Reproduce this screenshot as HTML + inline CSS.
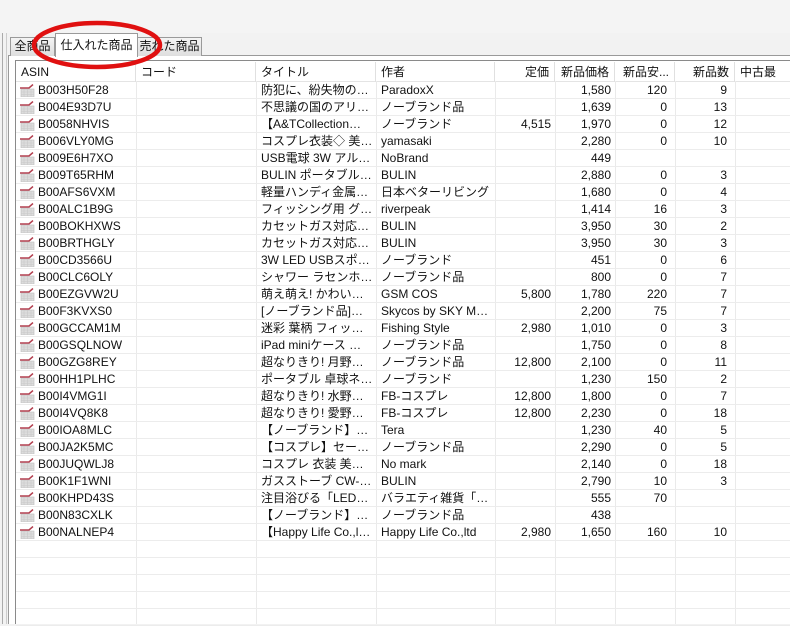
<!DOCTYPE html>
<html><head><meta charset="utf-8"><style>
*{margin:0;padding:0;box-sizing:border-box}
body{width:790px;height:624px;overflow:hidden;background:#f2f2f2;font-family:"Liberation Sans","Noto Sans CJK JP",sans-serif;font-size:12px;color:#111;position:relative}
.a{position:absolute}
.tab{position:absolute;border:1px solid #9a9a9a;border-bottom:none;background:linear-gradient(#f4f4f4,#dedede);font-size:12px;text-align:center;line-height:17px}
.row{position:absolute;left:16px;width:774px;height:17px;border-bottom:1px solid #ececec;line-height:17px;white-space:nowrap}
.c{position:absolute;top:0;height:17px;overflow:hidden;padding:0 4px;text-overflow:ellipsis}
.r{text-align:right}
.vl{position:absolute;top:81px;bottom:0;width:1px;background:#eaeaea}
.hd{position:absolute;top:62px;height:20px;line-height:20px;border-right:1px solid #e0e0e0;padding:0 5px;white-space:nowrap;overflow:hidden}
.ic{position:absolute;left:4px;top:2px;width:15px;height:13px}
</style></head><body>
<div class="a" style="left:0;top:0;width:790px;height:33px;background:#f4f4f4"></div>
<div class="a" style="left:2px;top:33px;width:1px;height:591px;background:#aaa"></div>
<div class="a" style="left:6px;top:33px;width:1px;height:591px;background:#ccc"></div>
<div class="a" style="left:8px;top:55px;width:782px;height:569px;background:#fff;border:1px solid #9a9a9a;border-right:none;border-bottom:none"></div>
<div class="tab" style="left:10px;top:37px;width:45px;height:19px">全商品</div>
<div class="tab" style="left:137px;top:37px;width:65px;height:19px">売れた商品</div>
<div class="tab" style="left:55px;top:33px;width:83px;height:24px;background:#fff;line-height:22px">仕入れた商品</div>
<div class="a" style="left:15px;top:60px;width:775px;height:564px;background:#fff;border:1px solid #8a8a8a;border-right:none;border-bottom:none"></div>
<div class="a" style="left:16px;top:61px;width:774px;height:21px;background:#fff;border-bottom:1px solid #e4e4e4"></div>
<div class="hd" style="left:16px;width:120px">ASIN</div>
<div class="hd" style="left:136px;width:120px">コード</div>
<div class="hd" style="left:256px;width:120px">タイトル</div>
<div class="hd" style="left:376px;width:119px">作者</div>
<div class="hd r" style="left:495px;width:60px">定価</div>
<div class="hd r" style="left:555px;width:60px">新品価格</div>
<div class="hd r" style="left:615px;width:60px">新品安...</div>
<div class="hd r" style="left:675px;width:60px">新品数</div>
<div class="hd" style="left:735px;width:60px">中古最</div>
<div class="vl" style="left:136px"></div><div class="vl" style="left:256px"></div><div class="vl" style="left:376px"></div><div class="vl" style="left:495px"></div><div class="vl" style="left:555px"></div><div class="vl" style="left:615px"></div><div class="vl" style="left:675px"></div><div class="vl" style="left:735px"></div>
<div id="rows"></div>
<svg class="a" style="left:0;top:0" width="220" height="80"><ellipse cx="97" cy="45" rx="63" ry="22" fill="none" stroke="#e01010" stroke-width="4.5"/></svg>
<script>
var d=[
["B003H50F28","防犯に、紛失物の捜...","ParadoxX","","1,580","120","9"],
["B004E93D7U","不思議の国のアリス...","ノーブランド品","","1,639","0","13"],
["B0058NHVIS","【A&TCollection】AK...","ノーブランド","4,515","1,970","0","12"],
["B006VLY0MG","コスプレ衣装◇ 美少...","yamasaki","","2,280","0","10"],
["B009E6H7XO","USB電球 3W アルミ・...","NoBrand","","449","",""],
["B009T65RHM","BULIN ポータブルラン...","BULIN","","2,880","0","3"],
["B00AFS6VXM","軽量ハンディ金属探...","日本ベターリビング","","1,680","0","4"],
["B00ALC1B9G","フィッシング用 グロー...","riverpeak","","1,414","16","3"],
["B00BOKHXWS","カセットガス対応アダ...","BULIN","","3,950","30","2"],
["B00BRTHGLY","カセットガス対応アダ...","BULIN","","3,950","30","3"],
["B00CD3566U","3W LED USBスポット...","ノーブランド","","451","0","6"],
["B00CLC6OLY","シャワー ラセンホース...","ノーブランド品","","800","0","7"],
["B00EZGVW2U","萌え萌え! かわいい ...","GSM COS","5,800","1,780","220","7"],
["B00F3KVXS0","[ノーブランド品]【コス...","Skycos by SKY MA...","","2,200","75","7"],
["B00GCCAM1M","迷彩 葉柄 フィッシン...","Fishing Style","2,980","1,010","0","3"],
["B00GSQLNOW","iPad miniケース デニ...","ノーブランド品","","1,750","0","8"],
["B00GZG8REY","超なりきり! 月野うさ...","ノーブランド品","12,800","2,100","0","11"],
["B00HH1PLHC","ポータブル 卓球ネット...","ノーブランド","","1,230","150","2"],
["B00I4VMG1I","超なりきり! 水野亜...","FB-コスプレ","12,800","1,800","0","7"],
["B00I4VQ8K8","超なりきり! 愛野美...","FB-コスプレ","12,800","2,230","0","18"],
["B00IOA8MLC","【ノーブランド】開閉式...","Tera","","1,230","40","5"],
["B00JA2K5MC","【コスプレ】セーラー服 ...","ノーブランド品","","2,290","0","5"],
["B00JUQWLJ8","コスプレ 衣装 美少...","No mark","","2,140","0","18"],
["B00K1F1WNI","ガスストーブ CW-C01...","BULIN","","2,790","10","3"],
["B00KHPD43S","注目浴びる「LEDで...","バラエティ雑貨「良品...","","555","70",""],
["B00N83CXLK","【ノーブランド】1.75W ...","ノーブランド品","","438","",""],
["B00NALNEP4"," 【Happy Life Co.,ltd...","Happy Life Co.,ltd","2,980","1,650","160","10"]];
var ic='<svg class="ic" viewBox="0 0 15 13"><rect x="1" y="5" width="13" height="8" fill="#ddd" stroke="#bbb" stroke-width="0.6"/><path d="M1 8h13M1 10.5h13M4 5v8M7.5 5v8M11 5v8" stroke="#c8c8c8" stroke-width="0.6"/><path d="M0 4h9l4-3.5" stroke="#b34050" stroke-width="1.5" fill="none"/></svg>';
var h='';
for(var i=0;i<32;i++){var y=82+i*17;var r=d[i];
h+='<div class="row" style="top:'+y+'px">';
if(r){h+=ic+'<div class="c" style="left:22px;width:100px;padding:0">'+r[0]+'</div>'+
'<div class="c" style="left:241px;width:120px">'+r[1]+'</div>'+
'<div class="c" style="left:361px;width:119px">'+r[2]+'</div>'+
'<div class="c r" style="left:479px;width:60px">'+r[3]+'</div>'+
'<div class="c r" style="left:539px;width:60px">'+r[4]+'</div>'+
'<div class="c r" style="left:599px;width:60px;padding-right:8px">'+r[5]+'</div>'+
'<div class="c r" style="left:659px;width:60px;padding-right:8px">'+r[6]+'</div>';}
h+='</div>';}
document.getElementById('rows').innerHTML=h;
</script>
</body></html>
